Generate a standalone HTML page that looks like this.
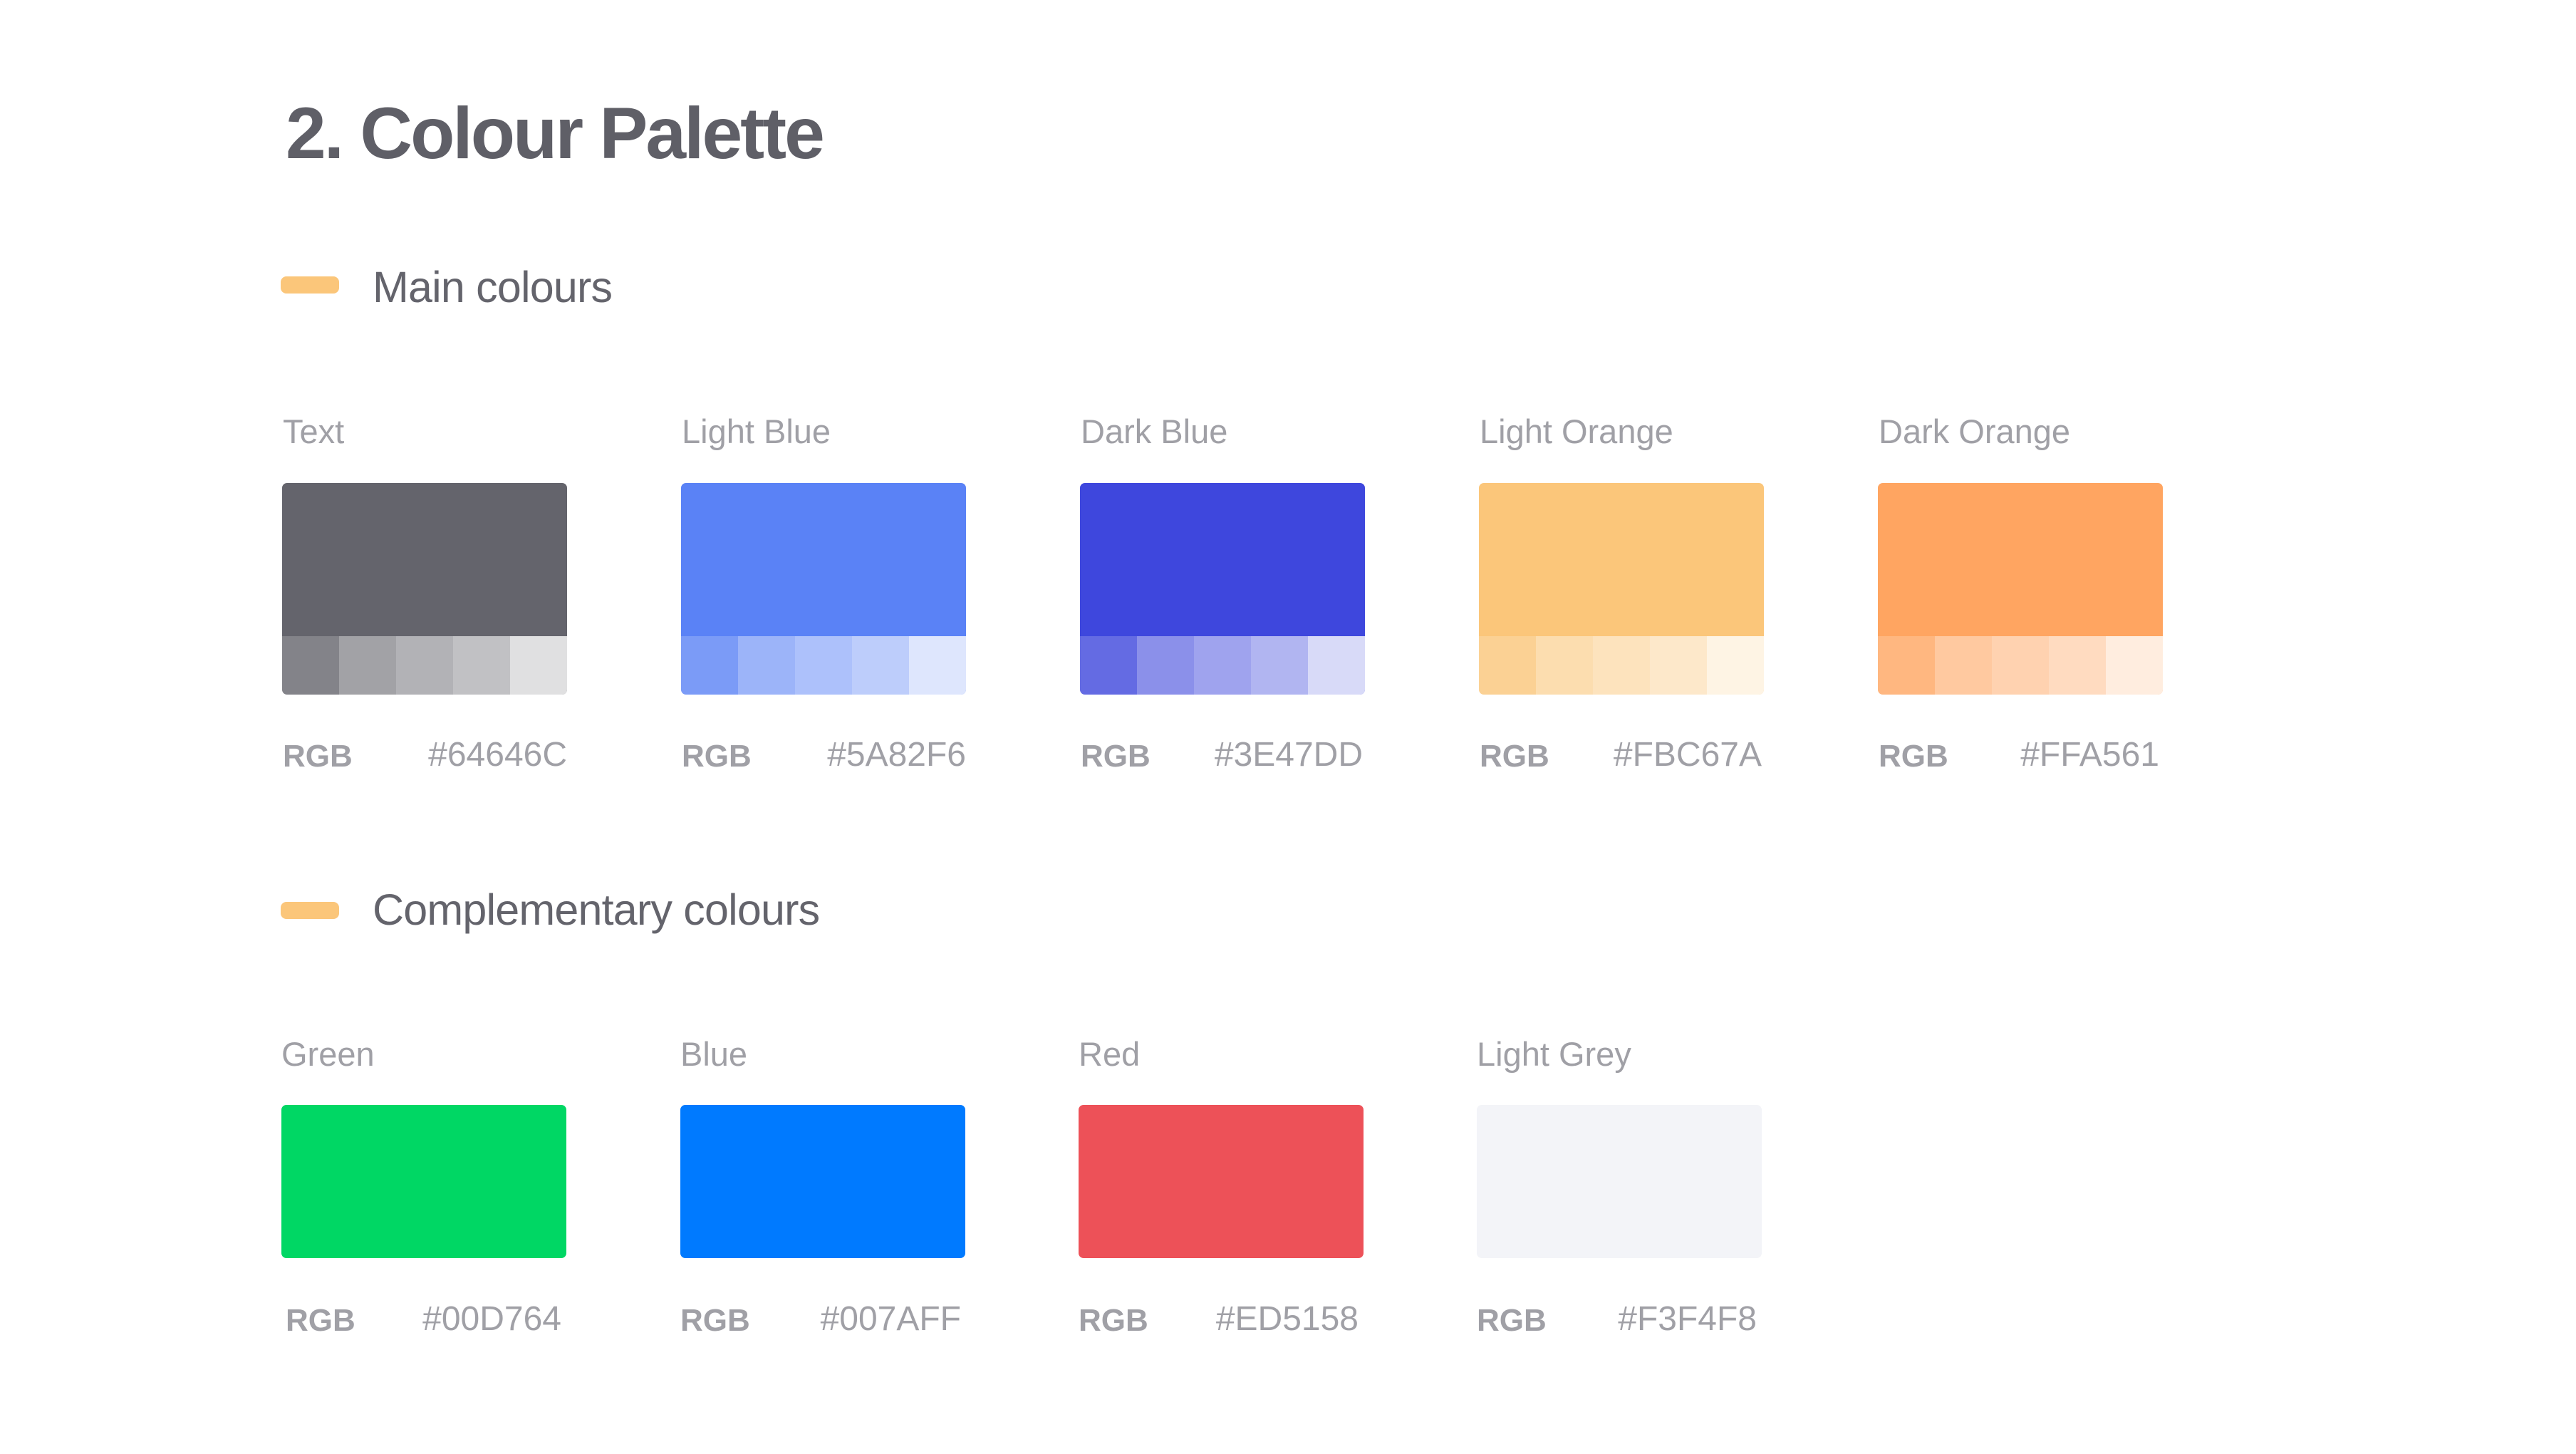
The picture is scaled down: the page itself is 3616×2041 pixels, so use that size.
<!DOCTYPE html>
<html><head><meta charset="utf-8"><style>
*{margin:0;padding:0;box-sizing:border-box}
html,body{width:3616px;height:2041px;background:#fff;overflow:hidden;font-family:"Liberation Sans",sans-serif}
h1{position:absolute;left:401px;top:122px;font-size:102px;line-height:130px;font-weight:bold;color:#5f5f67;letter-spacing:-3px;white-space:nowrap}
.bar{position:absolute;width:82px;height:24px;border-radius:8px;background:#fbc67a}
.sec{position:absolute;font-size:61px;color:#64646c;white-space:nowrap;letter-spacing:-0.8px;line-height:70px}
.lab{position:absolute;font-size:47px;color:#a0a0a6;white-space:nowrap;line-height:56px}
.sw{position:absolute;width:400px;border-radius:7px;overflow:hidden}
.main{height:215px}
.row{height:82px;display:flex}
.row div{flex:1;position:relative}
.row div::after{content:"";position:absolute;inset:0;background:#fff}
.row div:nth-child(1)::after{opacity:.2}
.row div:nth-child(2)::after{opacity:.4}
.row div:nth-child(3)::after{opacity:.5}
.row div:nth-child(4)::after{opacity:.6}
.row div:nth-child(5)::after{opacity:.8}
.rgb{position:absolute;font-size:44px;font-weight:bold;color:#a0a0a6;line-height:50px}
.hex{position:absolute;font-size:48px;color:#a0a0a6;line-height:50px;text-align:right;width:300px}
</style></head><body>
<h1>2. Colour Palette</h1>

<div class="bar" style="left:394px;top:388px"></div>
<div class="sec" style="left:523px;top:368px">Main colours</div>

<div class="lab" style="left:397px;top:578px">Text</div>
<div class="sw" style="left:396px;top:678px"><div class="main" style="background:#64646C"></div><div class="row"><div style="background:#64646C"></div><div style="background:#64646C"></div><div style="background:#64646C"></div><div style="background:#64646C"></div><div style="background:#64646C"></div></div></div>
<div class="rgb" style="left:397px;top:1037px">RGB</div>
<div class="hex" style="left:496px;top:1035px">#64646C</div>

<div class="lab" style="left:957px;top:578px">Light Blue</div>
<div class="sw" style="left:956px;top:678px"><div class="main" style="background:#5A82F6"></div><div class="row"><div style="background:#5A82F6"></div><div style="background:#5A82F6"></div><div style="background:#5A82F6"></div><div style="background:#5A82F6"></div><div style="background:#5A82F6"></div></div></div>
<div class="rgb" style="left:957px;top:1037px">RGB</div>
<div class="hex" style="left:1056px;top:1035px">#5A82F6</div>

<div class="lab" style="left:1517px;top:578px">Dark Blue</div>
<div class="sw" style="left:1516px;top:678px"><div class="main" style="background:#3E47DD"></div><div class="row"><div style="background:#3E47DD"></div><div style="background:#3E47DD"></div><div style="background:#3E47DD"></div><div style="background:#3E47DD"></div><div style="background:#3E47DD"></div></div></div>
<div class="rgb" style="left:1517px;top:1037px">RGB</div>
<div class="hex" style="left:1613px;top:1035px">#3E47DD</div>

<div class="lab" style="left:2077px;top:578px">Light Orange</div>
<div class="sw" style="left:2076px;top:678px"><div class="main" style="background:#FBC67A"></div><div class="row"><div style="background:#FBC67A"></div><div style="background:#FBC67A"></div><div style="background:#FBC67A"></div><div style="background:#FBC67A"></div><div style="background:#FBC67A"></div></div></div>
<div class="rgb" style="left:2077px;top:1037px">RGB</div>
<div class="hex" style="left:2173px;top:1035px">#FBC67A</div>

<div class="lab" style="left:2637px;top:578px">Dark Orange</div>
<div class="sw" style="left:2636px;top:678px"><div class="main" style="background:#FFA561"></div><div class="row"><div style="background:#FFA561"></div><div style="background:#FFA561"></div><div style="background:#FFA561"></div><div style="background:#FFA561"></div><div style="background:#FFA561"></div></div></div>
<div class="rgb" style="left:2637px;top:1037px">RGB</div>
<div class="hex" style="left:2731px;top:1035px">#FFA561</div>

<div class="bar" style="left:394px;top:1266px"></div>
<div class="sec" style="left:523px;top:1242px">Complementary colours</div>

<div class="lab" style="left:395px;top:1452px">Green</div>
<div class="sw main" style="left:395px;top:1551px;background:#00D764"></div>
<div class="rgb" style="left:401px;top:1829px">RGB</div>
<div class="hex" style="left:488px;top:1827px">#00D764</div>

<div class="lab" style="left:955px;top:1452px">Blue</div>
<div class="sw main" style="left:955px;top:1551px;background:#007AFF"></div>
<div class="rgb" style="left:955px;top:1829px">RGB</div>
<div class="hex" style="left:1049px;top:1827px">#007AFF</div>

<div class="lab" style="left:1514px;top:1452px">Red</div>
<div class="sw main" style="left:1514px;top:1551px;background:#ED5158"></div>
<div class="rgb" style="left:1514px;top:1829px">RGB</div>
<div class="hex" style="left:1607px;top:1827px">#ED5158</div>

<div class="lab" style="left:2073px;top:1452px">Light Grey</div>
<div class="sw main" style="left:2073px;top:1551px;background:#F3F4F8"></div>
<div class="rgb" style="left:2073px;top:1829px">RGB</div>
<div class="hex" style="left:2166px;top:1827px">#F3F4F8</div>
</body></html>
